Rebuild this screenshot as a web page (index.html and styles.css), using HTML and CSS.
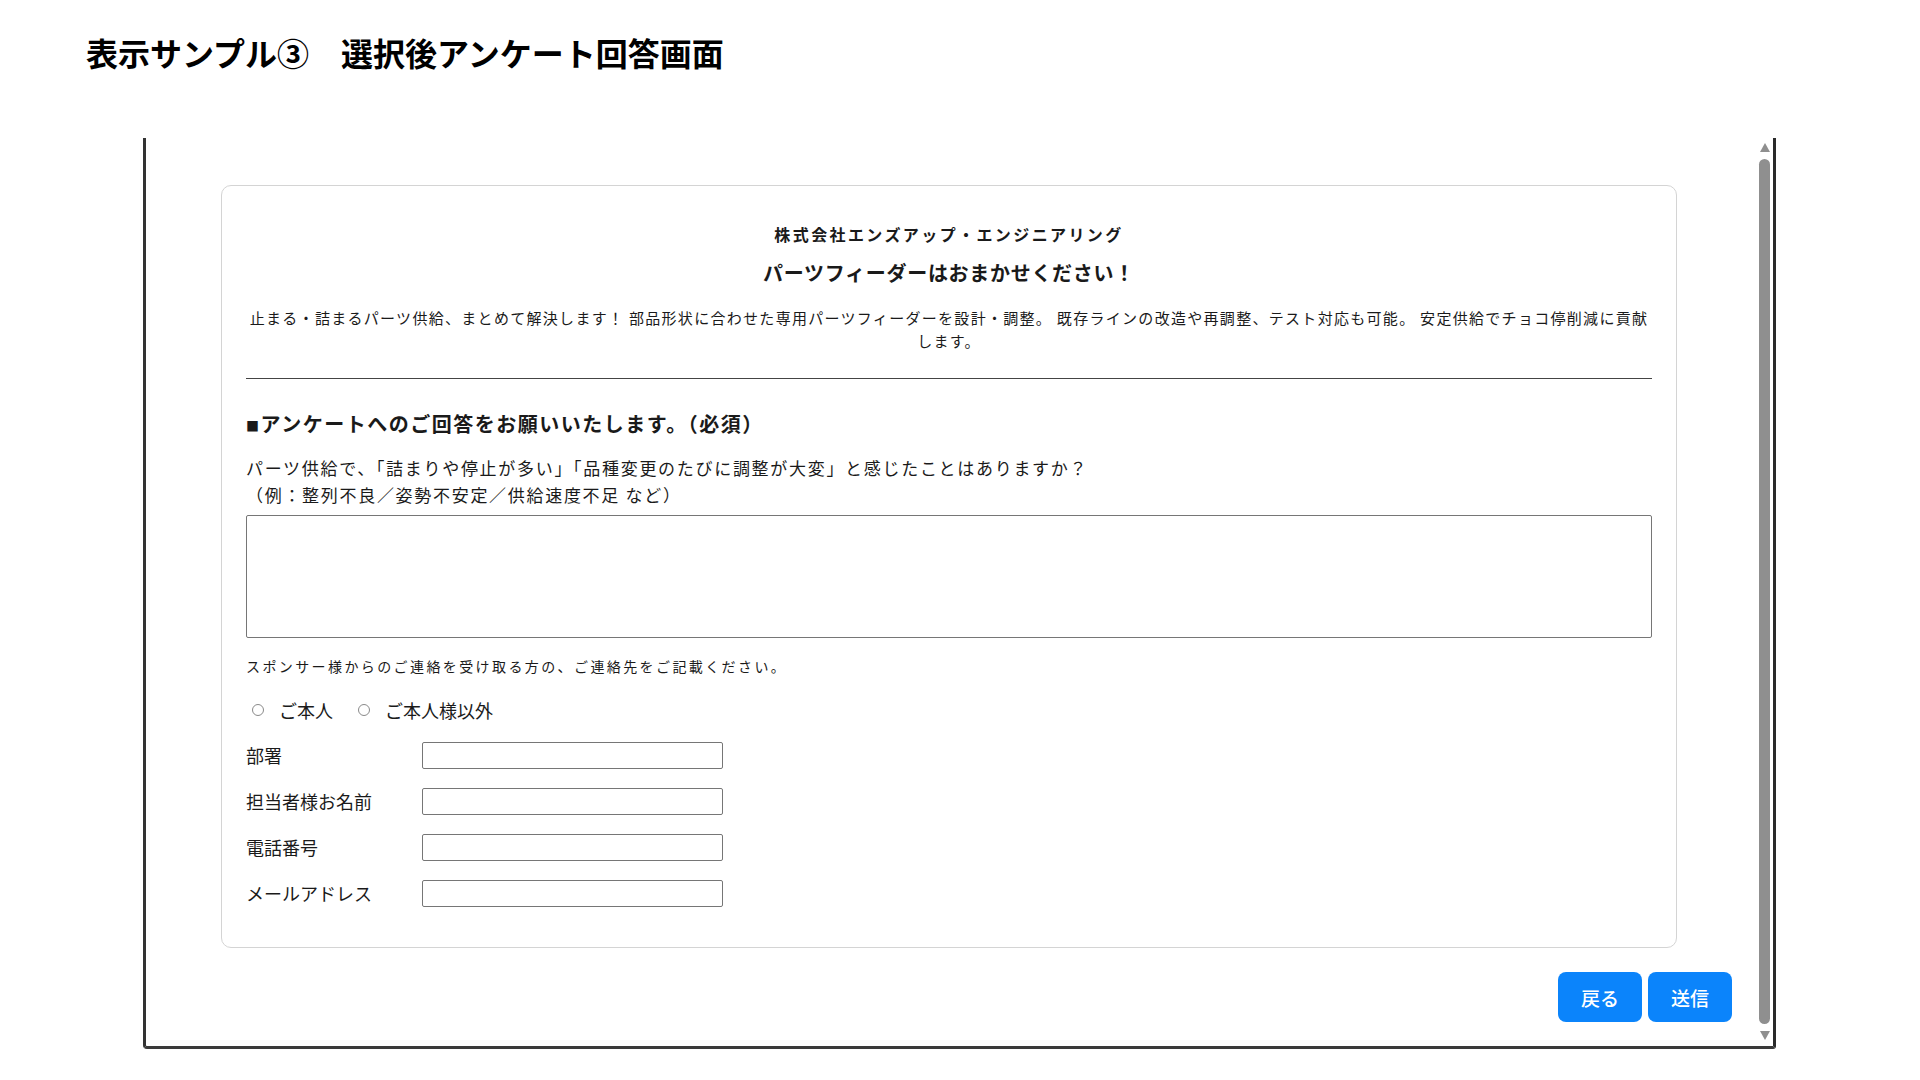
FILE: index.html
```html
<!DOCTYPE html>
<html lang="ja">
<head>
  <meta charset="UTF-8">
  <meta name="viewport" content="width=device-width, initial-scale=1.0">
  <title>表示サンプル③ 選択後アンケート回答画面</title>
  <link rel="stylesheet" href="styles.css">
</head>
<body>
  <h1 class="page-title">表示サンプル③　選択後アンケート回答画面</h1>

  <div class="frame">
    <div class="frame-body">
      <div class="card">
        <div class="company">株式会社エンズアップ・エンジニアリング</div>
        <h2 class="catch">パーツフィーダーはおまかせください！</h2>
        <p class="lead">止まる・詰まるパーツ供給、まとめて解決します！ 部品形状に合わせた専用パーツフィーダーを設計・調整。 既存ラインの改造や再調整、テスト対応も可能。 安定供給でチョコ停削減に貢献します。</p>
        <hr class="divider">

        <h3 class="section-title"><span class="mark">■</span>アンケートへのご回答をお願いいたします。（必須）</h3>
        <p class="question">パーツ供給で、「詰まりや停止が多い」「品種変更のたびに調整が大変」と感じたことはありますか？<br>（例：整列不良／姿勢不安定／供給速度不足 など）</p>
        <textarea class="answer"></textarea>

        <p class="note">スポンサー様からのご連絡を受け取る方の、ご連絡先をご記載ください。</p>

        <div class="radios">
          <label class="radio"><span class="dot"></span>ご本人</label>
          <label class="radio"><span class="dot"></span>ご本人様以外</label>
        </div>

        <div class="fields">
          <label class="field-label">部署</label>
          <input class="field-input" type="text">
          <label class="field-label">担当者様お名前</label>
          <input class="field-input" type="text">
          <label class="field-label">電話番号</label>
          <input class="field-input" type="text">
          <label class="field-label">メールアドレス</label>
          <input class="field-input" type="text">
        </div>
      </div>

      <div class="actions">
        <button class="btn">戻る</button>
        <button class="btn">送信</button>
      </div>
    </div>

    <div class="scrollbar">
      <span class="arrow up"></span>
      <span class="thumb"></span>
      <span class="arrow down"></span>
    </div>
  </div>
</body>
</html>
```

FILE: styles.css
```css
body {
  margin: 0;
  font-family: "Noto Sans CJK JP", "Noto Sans", sans-serif;
  color: #1a1a1a;
  background: #fff;
}

.page-title {
  margin: 0;
  padding: 30px 0 0 86px;
  font-size: 32px;
  line-height: 44px;
  font-weight: 700;
  color: #000;
}

.frame {
  display: flex;
  width: 1627px;
  height: 908px;
  margin: 64px 0 0 143px;
  border-left: 3px solid #333;
  border-right: 3px solid #2a2a2a;
  border-bottom: 3px solid #3a3a3a;
  border-radius: 0 0 3px 4px;
}

.frame-body {
  flex: 1;
  display: flex;
  flex-direction: column;
}

.card {
  margin: 47px 79px 0 75px;
  padding: 35px 24px 40px 24px;
  border: 1px solid #d4d4d4;
  border-radius: 10px;
}

.company {
  text-align: center;
  font-size: 16px;
  line-height: 26px;
  letter-spacing: 2.4px;
  font-weight: 700;
}

.catch {
  margin: 11px 0 0;
  text-align: center;
  font-size: 20px;
  line-height: 30px;
  letter-spacing: 0.7px;
  font-weight: 700;
}

.lead {
  margin: 18px 0 0;
  text-align: center;
  font-size: 15px;
  line-height: 23px;
  letter-spacing: 1.3px;
}

.divider {
  margin: 26px 0 0;
  border: 0;
  border-top: 1.5px solid #444;
}

.section-title {
  margin: 30px 0 0;
  font-size: 20px;
  line-height: 30px;
  letter-spacing: 1.5px;
  font-weight: 700;
}

.mark {
  font-size: 13px;
  vertical-align: 1px;
}

.question {
  margin: 13px 0 0;
  font-size: 17px;
  line-height: 27px;
  letter-spacing: 1.7px;
}

.answer {
  display: block;
  box-sizing: border-box;
  width: 100%;
  height: 123px;
  margin-top: 7px;
  border: 1px solid #767676;
  border-radius: 2px;
  resize: none;
}

.note {
  margin: 17px 0 0;
  font-size: 14px;
  line-height: 22px;
  letter-spacing: 2.4px;
}

.radios {
  display: flex;
  gap: 25px;
  margin: 21px 0 0 6px;
  height: 24px;
  align-items: center;
}

.radio {
  display: flex;
  align-items: center;
  gap: 15px;
  font-size: 18px;
  line-height: 24px;
}

.dot {
  width: 10px;
  height: 10px;
  border: 1px solid #8a8a8a;
  border-radius: 50%;
}

.fields {
  display: grid;
  grid-template-columns: 176px 301px;
  row-gap: 19px;
  align-items: center;
  margin-top: 20px;
}

.field-label {
  font-size: 18px;
  line-height: 27px;
}

.field-input {
  box-sizing: border-box;
  height: 27px;
  margin: 0;
  border: 1px solid #767676;
  border-radius: 2px;
}

.actions {
  display: flex;
  justify-content: flex-end;
  gap: 6px;
  margin: 24px 24px 0 0;
}

.btn {
  width: 84px;
  height: 50px;
  border: 0;
  border-radius: 8px;
  background: #0b84fb;
  color: #fff;
  font-family: "Noto Sans CJK JP", sans-serif;
  font-size: 19px;
  font-weight: 500;
}

.scrollbar {
  width: 17px;
  display: flex;
  flex-direction: column;
  align-items: center;
  padding: 5px 0 6px;
  box-sizing: border-box;
}

.thumb {
  flex: 1;
  width: 11px;
  margin: 7px 0;
  border-radius: 6px;
  background: #8f8f8f;
}

.arrow {
  width: 0;
  height: 0;
  border-left: 5px solid transparent;
  border-right: 5px solid transparent;
}

.arrow.up {
  border-bottom: 9px solid #8f8f8f;
}

.arrow.down {
  border-top: 9px solid #8f8f8f;
}
```
